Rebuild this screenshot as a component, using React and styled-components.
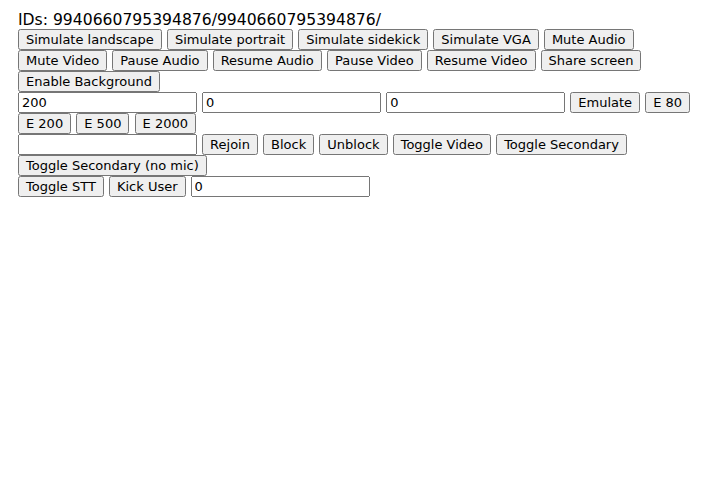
import React from "react";
import styled, { createGlobalStyle } from "styled-components";

const Global = createGlobalStyle`
  body {
    margin: 8px;
    font-family: "DejaVu Sans", sans-serif;
    background: #ffffff;
    color: #000000;
  }
`;

const Page = styled.div`
  padding: 3px 10px 0;
`;

const Ids = styled.div`
  font-size: 15.6px;
`;

const Row = styled.div`
  font-size: 16px;
`;

const Btn = styled.button`
  font-family: "DejaVu Sans", sans-serif;
  font-size: 13px;
`;

const Field = styled.input`
  font-family: "DejaVu Sans", sans-serif;
  font-size: 13px;
  box-sizing: border-box;
  width: 179px;
`;

export default function App() {
  return (
    <>
      <Global />
      <Page>
        <Ids>IDs: 9940660795394876/9940660795394876/</Ids>
        <Row>
          <Btn>Simulate landscape</Btn> <Btn>Simulate portrait</Btn>{" "}
          <Btn>Simulate sidekick</Btn> <Btn>Simulate VGA</Btn>{" "}
          <Btn>Mute Audio</Btn> <Btn>Mute Video</Btn> <Btn>Pause Audio</Btn>{" "}
          <Btn>Resume Audio</Btn> <Btn>Pause Video</Btn>{" "}
          <Btn>Resume Video</Btn> <Btn>Share screen</Btn>{" "}
          <Btn>Enable Background</Btn>
        </Row>
        <Row>
          <Field defaultValue="200" /> <Field defaultValue="0" />{" "}
          <Field defaultValue="0" /> <Btn>Emulate</Btn> <Btn>E 80</Btn>{" "}
          <Btn>E 200</Btn> <Btn>E 500</Btn> <Btn>E 2000</Btn>
        </Row>
        <Row>
          <Field /> <Btn>Rejoin</Btn> <Btn>Block</Btn> <Btn>Unblock</Btn>{" "}
          <Btn>Toggle Video</Btn> <Btn>Toggle Secondary</Btn>{" "}
          <Btn>Toggle Secondary (no mic)</Btn>
        </Row>
        <Row>
          <Btn>Toggle STT</Btn> <Btn>Kick User</Btn> <Field defaultValue="0" />
        </Row>
      </Page>
    </>
  );
}
